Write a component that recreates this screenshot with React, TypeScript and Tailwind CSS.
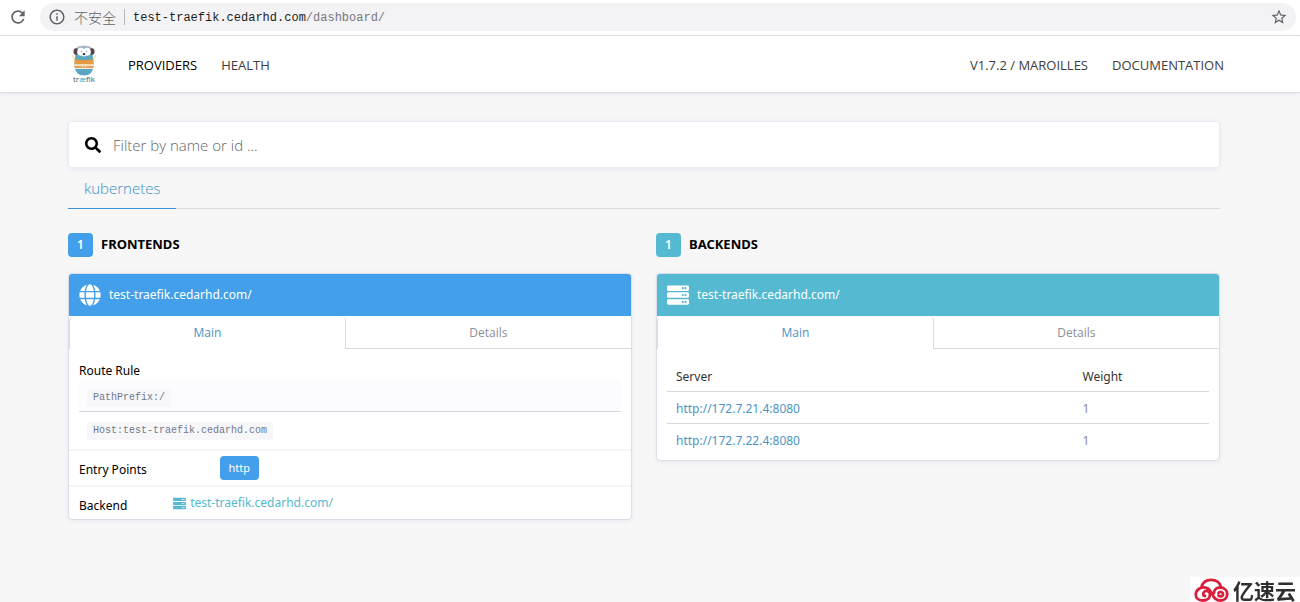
import { useState, type ReactNode } from 'react'
import { FaGlobe, FaSearch, FaServer } from 'react-icons/fa'
import { MdInfoOutline, MdRefresh, MdStarBorder } from 'react-icons/md'

const servers = [
  { url: 'http://172.7.21.4:8080', weight: 1 },
  { url: 'http://172.7.22.4:8080', weight: 1 },
]

function AddressBar() {
  return (
    <div className="flex h-9 items-center gap-3 border-b border-[#dcdcdf] bg-white pb-px pl-2 pr-1">
      <button aria-label="Reload" className="text-[#5f6368]">
        <MdRefresh size={20} />
      </button>
      <div className="flex h-7 flex-1 items-center rounded-full bg-[#f3f2f4] pl-2 pr-2 text-[#606366]">
        <MdInfoOutline size={18} />
        <span className="ml-2 font-['Noto_Sans_CJK_SC',sans-serif] text-sm leading-4 font-light">不安全</span>
        <span className="mx-2 h-4 w-px bg-[#b5b6b9]" />
        <span className="flex-1 pt-0.5 font-['Liberation_Mono',monospace] text-xs text-[#77797c]">
          <span className="text-[#1d1e20]">test-traefik.cedarhd.com</span>/dashboard/
        </span>
        <button aria-label="Bookmark this page">
          <MdStarBorder size={18} />
        </button>
      </div>
    </div>
  )
}

function TraefikLogo() {
  return (
    <svg width="32" height="40" viewBox="0 0 32 40" role="img" aria-label="traefik">
      <path d="M7 16L4 11M25 16L28 11" stroke="#f3dcae" strokeWidth="1.4" />
      <path d="M7.500 8Q7.500 2 16 2Q24.500 2 24.500 8L25.500 22Q25 31.500 16 31.500Q7 31.500 6.500 22Z" fill="#58a8c4" />
      <path d="M8 4.500Q9 1.500 16 1.500Q23 1.500 24 4.500L22 4.500Q16 2.500 10 4.500Z" fill="#b5bec3" />
      <ellipse cx="8" cy="7.500" rx="2.500" ry="3.300" fill="#58444b" />
      <ellipse cx="24" cy="7.500" rx="2.500" ry="3.300" fill="#58444b" />
      <ellipse cx="13" cy="7.800" rx="3.800" ry="4" fill="#fff" />
      <ellipse cx="19" cy="7.800" rx="3.800" ry="4" fill="#fff" />
      <circle cx="13.500" cy="7.500" r="0.800" fill="#8fb9ca" />
      <circle cx="18.500" cy="7.500" r="0.800" fill="#8fb9ca" />
      <ellipse cx="16" cy="11" rx="2.200" ry="1.500" fill="#e7eef0" />
      <ellipse cx="16" cy="10" rx="1.300" ry="0.900" fill="#2b2730" />
      <path d="M6.500 15Q16 17 25.500 15V20H6.500Z" fill="#e39a45" />
      <path d="M6 20H26V22H6Z" fill="#f3dcb4" />
      <path d="M6.500 22H25.500V24H6.500Z" fill="#e0a862" />
      <path d="M14.500 20V24M17.500 20V24" stroke="#f3e5cc" strokeWidth="0.600" />
      <path d="M7 24.500H25" stroke="#f4ead8" strokeWidth="1" />
      <text x="16" y="38" textAnchor="middle" fontFamily="Open Sans, sans-serif" fontSize="8" fill="#4f5a66">
        tr<tspan fill="#37abc8">æ</tspan>fik
      </text>
    </svg>
  )
}

function Navbar() {
  return (
    <nav className="border-b border-[#dcdde4] bg-white pr-3 shadow-[0_1px_4px_#e4e8f4]">
      <div className="mx-auto flex h-14 max-w-[1152px] items-center gap-6 text-[13px] text-[#3d3d3d]">
        <a href="#home" className="mr-1">
          <TraefikLogo />
        </a>
        <a href="#providers" className="pt-1 text-black">PROVIDERS</a>
        <a href="#health" className="pt-1">HEALTH</a>
        <a href="#version" className="ml-auto pt-1">V1.7.2 / MAROILLES</a>
        <a href="#documentation" className="-mr-1 pt-1">DOCUMENTATION</a>
      </div>
    </nav>
  )
}

interface PanelProps {
  title: string
  color: string
  icon: ReactNode
  children: ReactNode
}

function Panel({ title, color, icon, children }: PanelProps) {
  const [tab, setTab] = useState('Main')
  const active = 'rounded-t border-x border-[#dbdbe0] text-[#4a94c4]'
  const inactive = 'border-b border-[#d9dae0] text-[#8a8f99]'

  return (
    <section className="font-['Noto_Sans',sans-serif]">
      <h2 className="flex h-6 items-center gap-2 text-[13px] font-bold text-black">
        <span className={`flex h-6 w-[25px] items-center justify-center rounded text-xs font-semibold text-white ${color}`}>1</span>
        {title}
      </h2>
      <div className="mt-4 overflow-hidden rounded border border-[#dcdeea] bg-white shadow-[0_1px_5px_#e8e9f3]">
        <div className={`flex h-[42px] items-center gap-2 px-2.5 text-xs text-white ${color}`}>
          {icon}
          test-traefik.cedarhd.com/
        </div>
        <div className="flex pt-px font-['Open_Sans','Noto_Sans',sans-serif] text-xs">
          {['Main', 'Details'].map((name) => (
            <button
              key={name}
              onClick={() => setTab(name)}
              className={`h-8 flex-auto ${tab === name ? active : inactive}`}
            >
              {name}
            </button>
          ))}
        </div>
        {children}
      </div>
    </section>
  )
}

function FrontendDetails() {
  const chip = "bg-[#f7f7fa] px-1.5 py-1 font-['Liberation_Mono',monospace] text-[10px] leading-[10px] text-[#707789]"

  return (
    <div className="text-xs leading-5 text-black">
      <div className="border-b-2 border-[#f5f5f8] px-2.5 pt-3 pb-[7px]">
        <div>Route Rule</div>
        <div className="flex h-[31px] items-center border-b border-[#d6d7de] bg-[#fcfbfd] px-2 pt-1">
          <code className={chip}>PathPrefix:/</code>
        </div>
        <div className="flex h-[30px] items-end px-2 pb-0.5">
          <code className={chip}>Host:test-traefik.cedarhd.com</code>
        </div>
      </div>
      <div className="flex h-9 items-center border-b-2 border-[#f5f5f8] px-2.5">
        <span className="w-1/4 pt-1">Entry Points</span>
        <span className="ml-[5px] rounded bg-[#439fe9] px-[9px] text-[11px] leading-6 text-white">http</span>
      </div>
      <div className="flex h-8 items-center px-2.5">
        <span className="mr-0.5 w-[17%] pt-1.5">Backend</span>
        <a href="#backend" className="flex items-center gap-1 text-[#55b9cf]">
          <FaServer size={13} />
          test-traefik.cedarhd.com/
        </a>
      </div>
    </div>
  )
}

function ServerTable() {
  return (
    <div className="px-2.5 pt-[13px] pb-[5px]">
      <table className="w-full text-left text-xs text-[#858a94]">
        <thead>
          <tr className="h-[29px] border-b border-[#d6d7de] text-[#333333]">
            <th className="w-3/4 px-[9px] pt-0.5 font-normal">Server</th>
            <th className="px-[9px] pt-0.5 font-normal">Weight</th>
          </tr>
        </thead>
        <tbody>
          {servers.map((server) => (
            <tr key={server.url} className="h-8 border-b border-[#d6d7de] last:border-b-0">
              <td className="px-[9px] pt-1">
                <a href={server.url} className="text-[#4a94c4]">{server.url}</a>
              </td>
              <td className="px-[9px] pt-1">{server.weight}</td>
            </tr>
          ))}
        </tbody>
      </table>
    </div>
  )
}

function Watermark() {
  return (
    <div className="fixed right-0 bottom-0 flex h-[25px] items-center gap-1 bg-white pr-1 pl-1">
      <svg
        width="35"
        height="24"
        viewBox="0 0 35 24"
        fill="none"
        stroke="#d91f3c"
        strokeWidth="2.800"
        strokeLinecap="round"
        aria-hidden="true"
      >
        <path d="M7.500 9.500C8 5 12 1.800 17 1.800C22 1.800 26 4.500 27 9" />
        <path d="M13.500 10.500C11 9 8 9 5.500 10.500C3 12 1.800 14 1.800 16.500C1.800 20.500 5 22.500 8.500 22.500C13 22.500 16 20 16 16.500C16 13.500 12.500 12 10.500 13.500C8.500 15 9 18 11 18" />
        <path d="M13.500 10.500C16 11.500 17 13.500 18.500 16.500C20 20.500 22.500 22.500 26.500 22.500C30.500 22.500 33.200 20 33.200 16C33.200 12 30 9.500 26 9.500C22.500 9.500 20 12 20 15" />
        <path d="M24.500 15C26 13 29 14 29 16.200C29 18.500 25.500 19 24.500 17.500" />
      </svg>
      <span className="font-['Noto_Sans_CJK_SC',sans-serif] text-[21px] leading-6 font-bold text-[#303030]">亿速云</span>
    </div>
  )
}

export default function App() {
  return (
    <div className="min-h-screen bg-[#f7f7f7] font-['Open_Sans','Noto_Sans',sans-serif]">
      <AddressBar />
      <Navbar />
      <main className="pt-7 pr-3 pb-10">
        <div className="mx-auto max-w-[1152px]">
          <label className="flex h-[47px] items-center gap-3 rounded border border-[#ebecf3] bg-white px-4 shadow-[0_1px_5px_#e6e8f3]">
            <FaSearch size={16} className="text-black" />
            <input
              type="text"
              aria-label="Filter by name or id"
              placeholder="Filter by name or id ..."
              className="flex-1 pt-0.5 text-[15px] font-light outline-none placeholder:text-[#666666]"
            />
          </label>
          <div className="flex border-b border-[#dcdde0]">
            <a href="#kubernetes" className="-mb-px border-b border-[#3b93d6] px-4 pt-2 pb-2 text-[15px] leading-6 font-light text-[#3d8fc9]">
              kubernetes
            </a>
          </div>
          <div className="mt-6 grid grid-cols-2 items-start gap-6">
            <Panel title="FRONTENDS" color="bg-[#439fe9]" icon={<FaGlobe size={22} />}>
              <FrontendDetails />
            </Panel>
            <Panel title="BACKENDS" color="bg-[#54b9d1]" icon={<FaServer size={22} />}>
              <ServerTable />
            </Panel>
          </div>
        </div>
      </main>
      <Watermark />
    </div>
  )
}
